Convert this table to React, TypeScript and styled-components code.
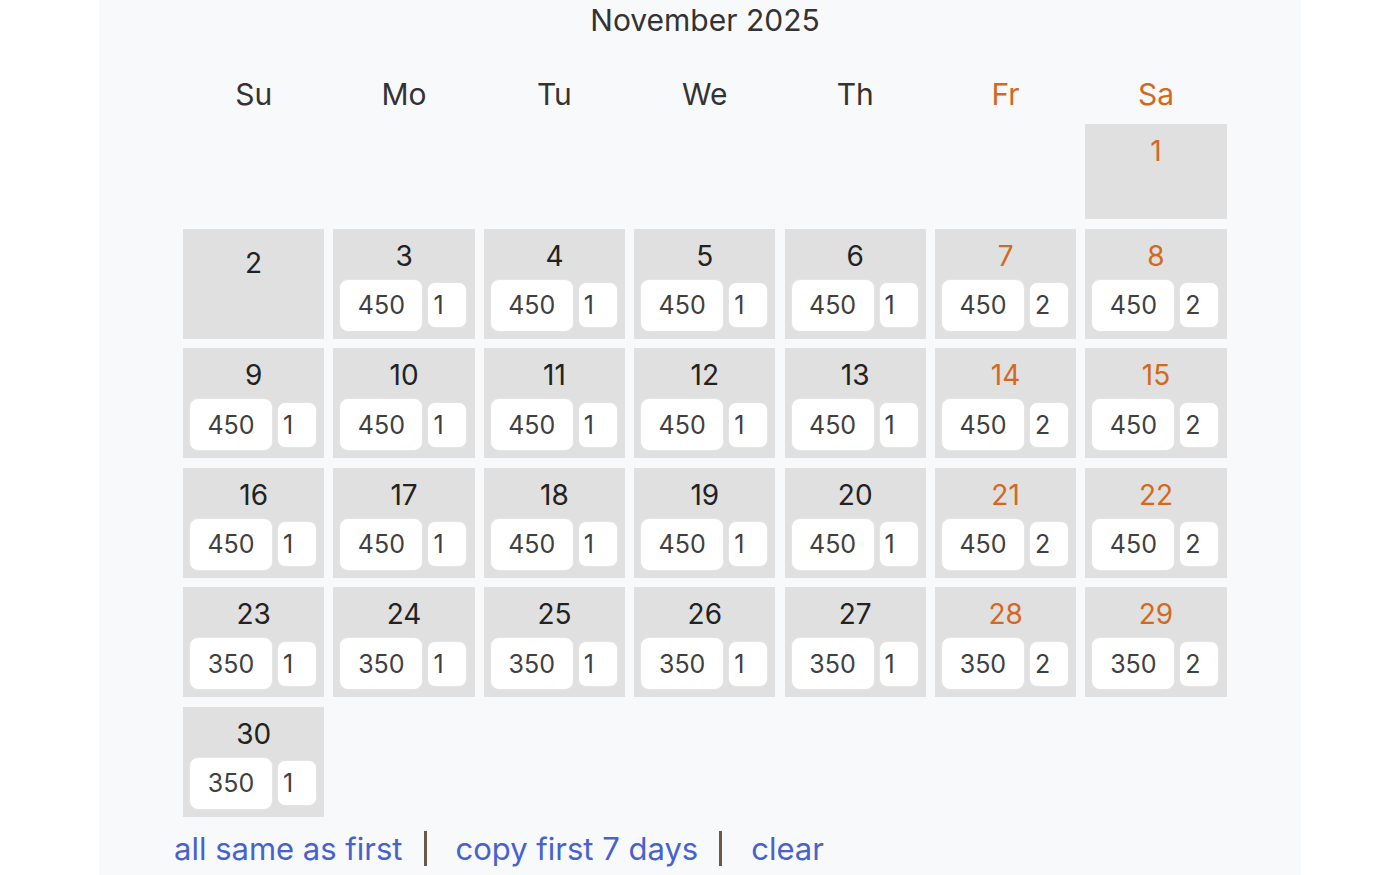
import React from 'react'
import styled, { createGlobalStyle } from 'styled-components'

const GlobalStyle = createGlobalStyle`
    html, body {
        margin: 0;
        padding: 0;
        background: #ffffff;
    }
    body {
        font-family: Inter, "Noto Sans", "Liberation Sans", sans-serif;
    }
`

const WEEKEND = '#d2691e'

const Page = styled.div`
    width: 1400px;
    height: 875px;
    overflow: hidden;
`

const Panel = styled.div`
    margin-left: 99px;
    width: 1202px;
    height: 875px;
    background: #f8f9fb;
    box-sizing: border-box;
    padding-left: 84px;
`

const Title = styled.div`
    width: 1044px;
    height: 40px;
    line-height: 40px;
    text-align: center;
    font-size: 30px;
    color: #333;
`

const WeekRow = styled.div`
    display: grid;
    grid-template-columns: repeat(7, 141.3px);
    column-gap: 9.1px;
    margin-top: 34px;
    margin-bottom: 10px;
`

const WeekDay = styled.div<{ $weekend?: boolean }>`
    height: 40px;
    line-height: 40px;
    text-align: center;
    font-size: 30px;
    color: ${(p) => (p.$weekend ? WEEKEND : '#333')};
`

const Grid = styled.div`
    display: grid;
    grid-template-columns: repeat(7, 141.3px);
    grid-template-rows: 95px repeat(5, 110px);
    column-gap: 9.1px;
    row-gap: 9.5px;
`

const Cell = styled.div<{ $shift?: boolean }>`
    background: #e0e0e0;
    box-sizing: border-box;
    padding: ${(p) => (p.$shift ? '17px' : '10px')} 6px 0;
    display: flex;
    flex-direction: column;
    align-items: center;
`

const DayNum = styled.div<{ $weekend?: boolean }>`
    font-size: 28px;
    line-height: 34px;
    height: 34px;
    color: ${(p) => (p.$weekend ? WEEKEND : '#222')};
`

const Inputs = styled.div`
    margin-top: 6px;
    display: flex;
    align-items: center;
    gap: 4px;
    width: 100%;
`

const Price = styled.div`
    width: 84px;
    height: 53px;
    box-sizing: border-box;
    background: #fff;
    border: 1px solid #e4e4e4;
    border-radius: 9px;
    display: flex;
    align-items: center;
    justify-content: center;
    font-size: 25px;
    color: #404040;
`

const MinStay = styled.div`
    width: 40px;
    height: 46px;
    box-sizing: border-box;
    background: #fff;
    border: 1px solid #e4e4e4;
    border-radius: 8px;
    display: flex;
    align-items: center;
    padding-left: 5px;
    font-size: 25px;
    color: #404040;
`

const Footer = styled.div`
    margin-top: 12px;
    margin-left: -9px;
    display: flex;
    align-items: center;
    height: 40px;
    font-size: 31px;
`

const Action = styled.a`
    color: #4762cc;
    text-decoration: none;
    line-height: 40px;
    cursor: pointer;
`

const Sep = styled.span`
    display: inline-block;
    width: 3px;
    height: 35px;
    background: #6b5a4a;
    margin: 0 29px 0 21px;
`

const weekDays = ['Su', 'Mo', 'Tu', 'We', 'Th', 'Fr', 'Sa']

type Day = { day: number; price?: number; stay?: number }

const days: Day[] = Array.from({ length: 30 }, (_, i) => {
    const d = i + 1
    if (d <= 2) return { day: d }
    const dow = (d + 5) % 7 // Nov 1 2025 is a Saturday
    return {
        day: d,
        price: d >= 23 ? 350 : 450,
        stay: dow === 5 || dow === 6 ? 2 : 1,
    }
})

export default function App() {
    const lead = 6
    return (
        <Page>
            <GlobalStyle />
            <Panel>
                <Title>November 2025</Title>
                <WeekRow>
                    {weekDays.map((w, i) => (
                        <WeekDay key={w} $weekend={i >= 5}>
                            {w}
                        </WeekDay>
                    ))}
                </WeekRow>
                <Grid>
                    {Array.from({ length: lead }, (_, i) => (
                        <div key={'e' + i} />
                    ))}
                    {days.map((d) => {
                        const dow = (d.day + 5) % 7
                        const weekend = dow === 5 || dow === 6
                        return (
                            <Cell key={d.day} $shift={d.day === 2}>
                                <DayNum $weekend={weekend}>{d.day}</DayNum>
                                {d.price && (
                                    <Inputs>
                                        <Price>{d.price}</Price>
                                        <MinStay>{d.stay}</MinStay>
                                    </Inputs>
                                )}
                            </Cell>
                        )
                    })}
                </Grid>
                <Footer>
                    <Action>all same as first</Action>
                    <Sep />
                    <Action>copy first 7 days</Action>
                    <Sep />
                    <Action>clear</Action>
                </Footer>
            </Panel>
        </Page>
    )
}
